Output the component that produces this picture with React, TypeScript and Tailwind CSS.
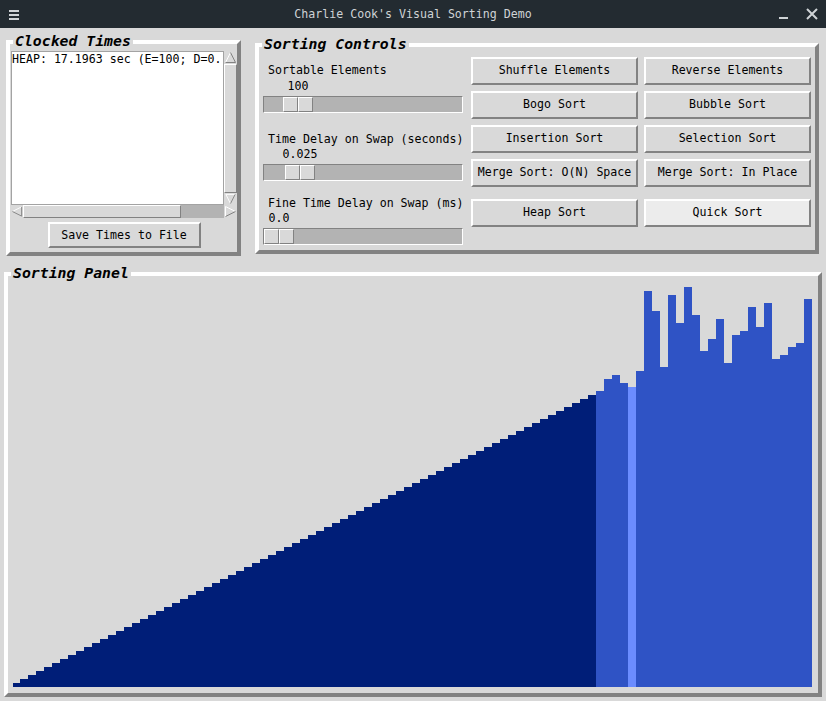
import React from 'react';

// 73 sorted at the front, the heap sort is still working on the tail
const TAIL = [74, 77, 78, 76, 75, 79, 99, 94, 80, 98, 91, 100, 93, 84, 87, 92, 81, 88, 89, 95, 90, 96, 82, 83, 85, 86, 97];
const VALUES = [...Array.from({ length: 73 }, (_, i) => i + 1), ...TAIL];
const SORTED = 73;
const ACTIVE = 77;

const BUTTONS = [
  ['Shuffle Elements', 'Reverse Elements'],
  ['Bogo Sort', 'Bubble Sort'],
  ['Insertion Sort', 'Selection Sort'],
  ['Merge Sort: O(N) Space', 'Merge Sort: In Place'],
  ['Heap Sort', 'Quick Sort'],
];

const SCALES = [
  { label: 'Sortable Elements', value: '100', offset: 19, top: 'mt-[16px]' },
  { label: 'Time Delay on Swap (seconds)', value: '0.025', offset: 21, top: 'mt-[19px]' },
  { label: 'Fine Time Delay on Swap (ms)', value: '0.0', offset: 0, top: 'mt-[15px]' },
];

const bevel = 'border-t-white border-l-white border-r-[#828282] border-b-[#828282]';

function Frame({ title, className, children }: { title: string; className: string; children: React.ReactNode }) {
  return (
    <div className={`relative border-4 ${bevel} ${className}`}>
      <span className="absolute left-[3px] top-[-12px] px-[2px] h-[17px] leading-[17px] bg-[#d9d9d9] text-[14.8px] font-bold italic text-black whitespace-nowrap">
        {title}
      </span>
      {children}
    </div>
  );
}

function Arrow({ dir, className }: { dir: 'up' | 'down' | 'left' | 'right'; className: string }) {
  const tri = {
    up: { p: '6.5,1.5 1.5,11.5 11.5,11.5', light: 'M6.5 1.5 L1.5 11.5', dark: 'M6.5 1.5 L11.5 11.5 L1.5 11.5' },
    down: { p: '1.5,1.5 11.5,1.5 6.5,11.5', light: 'M6.5 11.5 L1.5 1.5 L11.5 1.5', dark: 'M11.5 1.5 L6.5 11.5' },
    left: { p: '1.5,6.5 11.5,1.5 11.5,11.5', light: 'M1.5 6.5 L11.5 1.5', dark: 'M11.5 1.5 L11.5 11.5 L1.5 6.5' },
    right: { p: '1.5,1.5 11.5,6.5 1.5,11.5', light: 'M1.5 11.5 L1.5 1.5 L11.5 6.5', dark: 'M11.5 6.5 L1.5 11.5' },
  }[dir];
  return (
    <svg viewBox="0 0 13 13" className={`shrink-0 bg-[#d9d9d9] ${className}`}>
      <polygon points={tri.p} fill="#d9d9d9" />
      <path d={tri.light} stroke="#ffffff" strokeWidth="1" fill="none" />
      <path d={tri.dark} stroke="#828282" strokeWidth="1" fill="none" />
    </svg>
  );
}

export default function App() {
  return (
    <div className="w-[826px] h-[701px] bg-[#d9d9d9] flex flex-col overflow-hidden font-['DejaVu_Sans_Mono',monospace] text-black">
      {/* title bar */}
      <div className="h-[28px] shrink-0 bg-[#232b31] flex items-center text-[#cfd3d6]">
        <div className="w-[60px] pl-[9px] flex items-center">
          <svg width="10" height="11" viewBox="0 0 10 11">
            <rect x="0" y="1" width="10" height="2" fill="#cfd3d6" />
            <rect x="0" y="5" width="10" height="2" fill="#cfd3d6" />
            <rect x="0" y="9" width="10" height="2" fill="#cfd3d6" />
          </svg>
        </div>
        <div className="flex-1 text-center text-[11.6px] leading-[14px] whitespace-nowrap">Charlie Cook's Visual Sorting Demo</div>
        <div className="w-[60px] flex items-center">
          <svg width="10" height="12" viewBox="0 0 10 12" className="ml-[13px]">
            <rect x="0" y="9" width="9" height="2" fill="#cfd3d6" />
          </svg>
          <svg width="12" height="12" viewBox="0 0 12 12" className="ml-[17px]">
            <path d="M1 1 L11 11 M11 1 L1 11" stroke="#cfd3d6" strokeWidth="2" />
          </svg>
        </div>
      </div>

      <div className="flex items-start h-[228px] shrink-0">
        {/* Clocked Times */}
        <Frame title="Clocked Times" className="ml-[6px] mt-[12px] w-[235px] h-[216px] shrink-0">
          <div className="flex flex-col pl-[1px] pt-[7px]">
            <div className="flex h-[154px]">
              <div className="w-[213px] h-full bg-white border border-[#a3a3a3] overflow-hidden">
                <div className="whitespace-nowrap text-[11.6px] leading-[14px]">HEAP: 17.1963 sec (E=100; D=0.</div>
              </div>
              <div className="w-[13px] h-full flex flex-col bg-[#b3b3b3]">
                <Arrow dir="up" className="w-[13px] h-[13px]" />
                <div className={`flex-1 bg-[#d9d9d9] border ${bevel}`} />
                <Arrow dir="down" className="w-[13px] h-[12px]" />
              </div>
            </div>
            <div className="flex h-[13px] w-[226px] bg-[#b3b3b3]">
              <Arrow dir="left" className="w-[12px] h-[13px]" />
              <div className={`w-[158px] h-full bg-[#d9d9d9] border ${bevel}`} />
              <div className="flex-1" />
              <Arrow dir="right" className="w-[13px] h-[13px]" />
            </div>
            <button className={`mt-[4px] self-center w-[153px] h-[26px] bg-[#d9d9d9] border-2 ${bevel} flex items-center justify-center text-[11.6px] leading-[14px] pb-[1px]`}>
              Save Times to File
            </button>
          </div>
        </Frame>

        {/* Sorting Controls */}
        <Frame title="Sorting Controls" className="ml-[14px] mt-[15px] w-[564px] h-[211px] shrink-0">
          <div className="flex items-start pl-[4px]">
            <div className="w-[200px] flex flex-col">
              {SCALES.map((s, i) => (
                <div key={i} className={`flex flex-col ${s.top}`}>
                  <div className="ml-[5px] h-[14px] text-[11.6px] leading-[14px] whitespace-nowrap">{s.label}</div>
                  <div className={`h-[14px] flex ${i === 0 ? 'mt-[2px]' : 'mt-[1px]'}`}>
                    <div className="w-[30px] flex justify-center text-[11.6px] leading-[14px] whitespace-nowrap" style={{ marginLeft: s.offset + 1 }}>
                      {s.value}
                    </div>
                  </div>
                  <div className="mt-[3px] w-[200px] h-[17px] bg-[#b3b3b3] border border-t-[#828282] border-l-[#828282] border-b-white border-r-white flex">
                    <div className="h-full w-[30px] flex shrink-0" style={{ marginLeft: s.offset }}>
                      <div className={`w-[15px] h-full bg-[#d9d9d9] border ${bevel}`} />
                      <div className={`w-[15px] h-full bg-[#d9d9d9] border ${bevel}`} />
                    </div>
                  </div>
                </div>
              ))}
            </div>
            <div className="ml-[8px] mt-[10px] flex flex-col gap-[6px]">
              {BUTTONS.map((row, i) => (
                <div key={i} className={`flex gap-[6px] ${i === 4 ? 'mt-[6px]' : ''}`}>
                  {row.map((b) => (
                    <button
                      key={b}
                      className={`w-[167px] h-[28px] border-2 ${bevel} flex items-center justify-center text-[11.6px] leading-[14px] pb-[2px] whitespace-nowrap ${b === 'Quick Sort' ? 'bg-[#ececec]' : 'bg-[#d9d9d9]'}`}
                    >
                      {b}
                    </button>
                  ))}
                </div>
              ))}
            </div>
          </div>
        </Frame>
      </div>

      {/* Sorting Panel */}
      <Frame title="Sorting Panel" className="ml-[4px] mt-[16px] w-[818px] h-[425px] shrink-0">
        <div className="h-full flex items-end pl-[4px] pb-[6px]">
          {VALUES.map((v, i) => (
            <div
              key={i}
              className={`shrink-0 ${i === 0 ? 'w-[7px] ml-[1px]' : 'w-[8px]'} ${i < SORTED ? 'bg-[#001e78]' : i === ACTIVE ? 'bg-[#6b8cff]' : 'bg-[#2f53c5]'}`}
              style={{ height: v * 4 }}
            />
          ))}
        </div>
      </Frame>
    </div>
  );
}
